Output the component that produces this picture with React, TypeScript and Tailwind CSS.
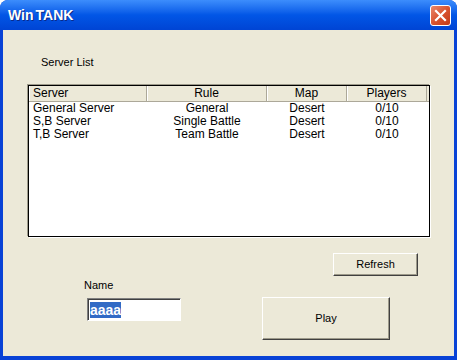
const rows = [
  { server: "General Server", rule: "General", map: "Desert", players: "0/10" },
  { server: "S,B Server", rule: "Single Battle", map: "Desert", players: "0/10" },
  { server: "T,B Server", rule: "Team Battle", map: "Desert", players: "0/10" },
];

const cols = [
  { label: "Server", w: "w-[118px]", align: "text-left pl-[4px]" },
  { label: "Rule", w: "w-[120px]", align: "text-center" },
  { label: "Map", w: "w-[80px]", align: "text-center" },
  { label: "Players", w: "w-[80px]", align: "text-center" },
];

function CloseButton() {
  return (
    <div className="flex h-[21px] w-[21px] items-center justify-center rounded-[3px] border border-white bg-gradient-to-br from-[#e8876a] via-[#d9532f] to-[#c23a17]">
      <svg width="13" height="13" viewBox="0 0 13 13">
        <path d="M2 2 L11 11 M11 2 L2 11" stroke="white" strokeWidth="2.2" strokeLinecap="square" />
      </svg>
    </div>
  );
}

function Button({ label, className }: { label: string; className: string }) {
  return (
    <button
      type="button"
      className={
        "flex items-center justify-center border border-t-white border-l-white border-b-[#404040] border-r-[#404040] bg-[#ece9d8] text-[11px] text-black shadow-[inset_-1px_-1px_0_#9d9a8a] " +
        className
      }
    >
      {label}
    </button>
  );
}

export default function App() {
  return (
    <div
      className="flex h-[360px] w-[457px] flex-col overflow-hidden rounded-t-[8px] bg-[#0842d6]"
      style={{ fontFamily: '"Liberation Sans", Arial, sans-serif' }}
    >
      {/* title bar */}
      <div className="flex h-[30px] shrink-0 items-center justify-between bg-gradient-to-b from-[#3c8dfc] via-[#0256e6] to-[#0044d4] pl-[8px] pr-[6px]">
        <span className="text-[14px] font-bold text-white [text-shadow:1px_1px_0_#0a2a8a]">
          Win<span className="ml-[2px]">TANK</span>
        </span>
        <CloseButton />
      </div>

      {/* client area */}
      <div className="mx-[3px] mb-[4px] flex flex-1 flex-col bg-[#ece9d8]">
        <div className="ml-[38px] mt-[25px] text-[11px] leading-[14px] text-black">Server List</div>

        <div className="ml-[25px] mt-[16px] h-[152px] w-[402px] border border-black bg-white shadow-[-1px_-1px_0_#9d9a8a,1px_1px_0_#ffffff]">
          <div className="flex h-[16px] border-b border-[#aca899] bg-[#ece9d8]">
            {cols.map((c) => (
              <div
                key={c.label}
                className={`${c.w} ${c.align} border-r border-[#aca899] text-[12px] leading-[15px] text-black shadow-[inset_1px_0_0_#ffffff]`}
              >
                {c.label}
              </div>
            ))}
          </div>
          {rows.map((r) => (
            <div key={r.server} className="flex h-[13px] text-[12px] leading-[13px] text-black">
              <div className="w-[118px] pl-[4px]">{r.server}</div>
              <div className="w-[120px] text-center">{r.rule}</div>
              <div className="w-[80px] text-center">{r.map}</div>
              <div className="w-[80px] text-center">{r.players}</div>
            </div>
          ))}
        </div>

        <div className="ml-[330px] mt-[16px]">
          <Button label="Refresh" className="h-[23px] w-[85px]" />
        </div>

        <div className="flex items-start">
          <div className="ml-[81px] flex w-[178px] flex-col">
            <div className="mt-[2px] text-[11px] leading-[14px] text-black">Name</div>
            <div className="ml-[3px] mt-[6px] flex h-[23px] w-[94px] items-center border border-t-[#808080] border-l-[#808080] border-b-white border-r-white bg-white pl-[2px] shadow-[inset_1px_1px_0_#404040]">
              <span className="bg-[#316ac5] text-[14px] font-bold leading-[16px] text-white">aaaa</span>
            </div>
          </div>
          <Button label="Play" className="mt-[21px] h-[43px] w-[128px]" />
        </div>
      </div>
    </div>
  );
}
